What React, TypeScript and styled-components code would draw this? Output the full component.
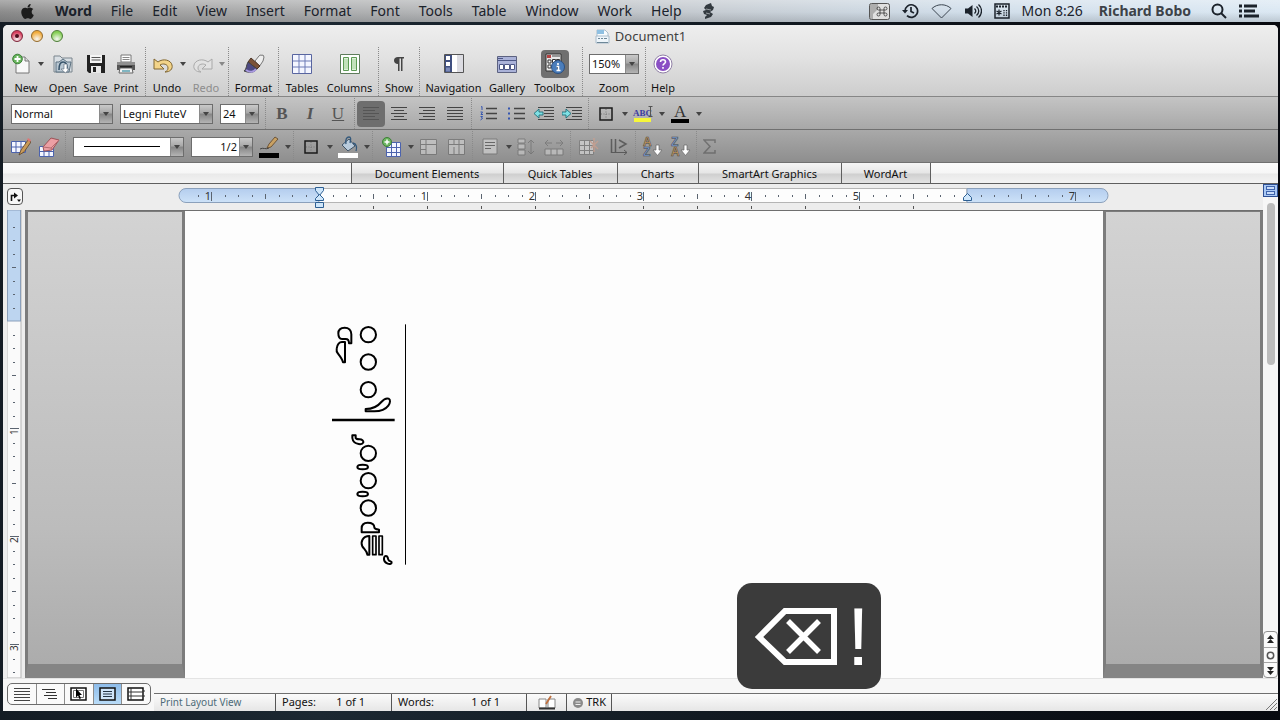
import React from "react";
import styled, { createGlobalStyle, css } from "styled-components";
import { FaApple } from "react-icons/fa";

const Global = createGlobalStyle`
  * { box-sizing: border-box; }
  body {
    margin: 0;
    background: #10171f;
    font-family: "Noto Sans", "Open Sans", "Liberation Sans", sans-serif;
    color: #111;
  }
  button, select, input { font: inherit; color: inherit; }
  svg { display: block; flex: none; }
`;

const INK = "#1b222b";

const Desktop = styled.div`
  min-height: 100vh;
  display: flex;
  flex-direction: column;
  position: relative;
  background: linear-gradient(90deg, #141c24 0%, #1c2832 25%, #121a22 55%, #07090f 100%);
`;

/* ---------- system menu bar ---------- */

const MenuBar = styled.header`
  display: flex;
  align-items: center;
  height: 22px;
  padding: 0 21px 0 19px;
  background:
    linear-gradient(180deg, rgba(255, 255, 255, 0.3) 0%, rgba(255, 255, 255, 0) 55%, rgba(30, 35, 40, 0.16) 100%),
    linear-gradient(90deg, #8b8b8b 0%, #a2a2a2 12%, #b4b6b8 35%, #c5cbd1 55%, #d0dde9 75%, #dbe8f3 100%);
`;

const Menus = styled.nav`
  display: flex;
  flex: 1;
  align-items: center;
  gap: 1px;
  margin-left: 10px;
`;

const MenuItem = styled.button<{ $strong?: boolean }>`
  border: 0;
  padding: 0 9px;
  background: none;
  font-size: 14px;
  line-height: 20px;
  font-weight: ${(p) => (p.$strong ? 700 : 400)};
  color: ${INK};
`;

const MenuExtras = styled.div`
  display: flex;
  align-items: center;
  gap: 12px;
  font-size: 14px;
  line-height: 20px;
  color: ${INK};
`;

const UserName = styled.span`
  margin: 0 8px 0 4px;
  font-weight: 700;
  color: #3d4248;
`;

/* ---------- window frame ---------- */

const Window = styled.main`
  flex: 1;
  display: flex;
  flex-direction: column;
  margin: 3px 2px 9px 3px;
  border-radius: 5px 5px 0 0;
  overflow: hidden;
  background: #ededed;
`;

const WindowHead = styled.div`
  background: linear-gradient(180deg, #eeeeee 0%, #e2e2e2 45%, #cdcdcd 100%);
  border-bottom: 1px solid #868686;
`;

const TitleBar = styled.div`
  display: grid;
  grid-template-columns: 1fr auto 1fr;
  align-items: center;
  height: 22px;
  padding: 0 8px;
`;

const Lights = styled.div`
  display: flex;
  gap: 8px;
`;

const Light = styled.button<{ $fill: string; $edge: string; $edited?: boolean }>`
  display: flex;
  align-items: center;
  justify-content: center;
  width: 12px;
  height: 12px;
  padding: 0;
  border: 1px solid ${(p) => p.$edge};
  border-radius: 50%;
  background: radial-gradient(circle at 50% 80%, #ffffff99 0%, ${(p) => p.$fill} 70%);
  ${(p) => p.$edited && css`
    &::after {
      content: "";
      width: 4px;
      height: 4px;
      border-radius: 50%;
      background: #4d0d1c;
    }
  `}
`;

const Title = styled.h1`
  display: flex;
  align-items: center;
  gap: 5px;
  margin: 0;
  font-size: 13px;
  line-height: 20px;
  font-weight: 400;
  color: #404040;
`;

const Toolbar = styled.div`
  display: flex;
  height: 49px;
  padding-left: 5px;
`;

const Tool = styled.button<{ $w: number; $faded?: boolean }>`
  display: flex;
  flex-direction: column;
  align-items: center;
  width: ${(p) => p.$w}px;
  padding: 0;
  border: 0;
  background: none;
  font-size: 11px;
  line-height: 14px;
  white-space: nowrap;
  color: ${(p) => (p.$faded ? "#8d8d8d" : "#111")};
`;

const ToolGlyph = styled.span<{ $caret?: boolean }>`
  display: flex;
  align-items: center;
  justify-content: center;
  gap: 6px;
  height: 34px;
  padding-left: ${(p) => (p.$caret ? 4 : 0)}px;
`;

const Pressed = styled.span`
  display: flex;
  align-items: center;
  justify-content: center;
  width: 28px;
  height: 28px;
  border-radius: 4px;
  background: #6f6f6f;
`;

const ZoomField = styled.label`
  display: flex;
  flex-direction: column;
  align-items: center;
  width: 58px;
  font-size: 11px;
  line-height: 14px;
`;

const Divider = styled.span`
  width: 5px;
  display: flex;
  justify-content: center;
  align-self: stretch;
  &::before {
    content: "";
    border-left: 1px dotted #8a8a8a;
  }
`;

/* ---------- formatting bars ---------- */

const FormatBar = styled.div<{ $deep?: boolean }>`
  display: flex;
  align-items: center;
  height: 33px;
  padding: 1px 0 0 ${(p) => (p.$deep ? 4 : 8)}px;
  border-bottom: 1px solid #707070;
  background: ${(p) =>
    p.$deep ? "linear-gradient(180deg, #a9a9a9, #8e8e8e)" : "linear-gradient(180deg, #c4c4c4, #a8a8a8)"};
`;

const Combos = styled.div<{ $end: number; $start?: number }>`
  display: flex;
  gap: 7px;
  margin: 0 ${(p) => p.$end}px 0 ${(p) => p.$start || 0}px;
`;

const Combo = styled.span<{ $w: number }>`
  display: flex;
  width: ${(p) => p.$w}px;
  height: 20px;
  border: 1px solid #6d6d6d;
  background: #fff;
  select {
    flex: 1;
    min-width: 0;
    appearance: none;
    border: 0;
    padding: 0 2px;
    background: #fff;
    color: #111;
    font-size: 11px;
    line-height: 18px;
  }
`;

const ComboArrow = styled.span`
  display: flex;
  align-items: center;
  justify-content: center;
  width: 13px;
  border-left: 1px solid #8a8a8a;
  background: linear-gradient(180deg, #c9c9c9 0%, #a8a8a8 45%, #858585 50%, #b4b4b4 100%);
`;

const BarButton = styled.button<{ $w?: number; $on?: boolean; $faded?: boolean }>`
  display: flex;
  align-items: center;
  justify-content: center;
  width: ${(p) => p.$w || 28}px;
  height: 26px;
  padding: 0;
  border: 0;
  border-radius: 4px;
  background: ${(p) => (p.$on ? "#6e6e6e" : "none")};
  opacity: ${(p) => (p.$faded ? 0.6 : 1)};
`;

const Letter = styled.span<{ $kind: "b" | "i" | "u" }>`
  font-family: "Liberation Serif", serif;
  font-size: 17px;
  line-height: 18px;
  font-weight: 700;
  color: #555;
  ${(p) => p.$kind === "i" && css`font-style: italic;`}
  ${(p) => p.$kind === "u" && css`font-weight: 400; text-decoration: underline;`}
`;

const CaretSlot = styled.span`
  display: flex;
  justify-content: center;
  width: 7px;
`;

/* ---------- elements gallery tabs ---------- */

const TabRow = styled.div`
  display: flex;
  justify-content: center;
  height: 21px;
  border-bottom: 1px solid #5f5f5f;
  background: linear-gradient(180deg, #fbfbfb 0%, #f6f6f6 50%, #e9e9e9 55%, #f3f3f3 100%);
`;

const Tab = styled.button<{ $w: number }>`
  width: ${(p) => p.$w}px;
  padding: 1px 0 0;
  border: 0;
  border-left: 1px solid #5f5f5f;
  background: linear-gradient(180deg, #f5f5f5 0%, #e6e6e6 50%, #cfcfcf 55%, #e3e3e3 100%);
  font-size: 11px;
  line-height: 18px;
  white-space: nowrap;
  color: #111;
  &:last-child { border-right: 1px solid #5f5f5f; }
`;

/* ---------- document area ---------- */

const Body = styled.div`
  flex: 1;
  display: grid;
  grid-template-columns: 22px minmax(0, 1fr) 15px;
  grid-template-rows: 26px minmax(0, 1fr);
`;

const Corner = styled.div`
  display: flex;
  padding: 4px 0 0 4px;
`;

const TabStop = styled.button`
  display: flex;
  width: 16px;
  height: 17px;
  padding: 1px;
  border: 1px solid #555;
  border-radius: 4px;
  background: #f7f7f7;
`;

const RulerRow = styled.div`
  display: flex;
  justify-content: center;
  overflow: hidden;
`;

const ScrollColumn = styled.div`
  grid-column: 3;
  grid-row: 1 / 3;
  display: flex;
  flex-direction: column;
  align-items: center;
  background: #f6f6f6;
`;

const SplitHandle = styled.button`
  display: flex;
  flex-direction: column;
  justify-content: space-evenly;
  width: 15px;
  height: 13px;
  padding: 0 2px;
  border: 1px solid #2d4f94;
  background: #a9c8f4;
  i { height: 4px; border: 1px solid #3f64ad; background: #c9dcf9; }
`;

const Track = styled.div`
  flex: 1;
  padding-top: 6px;
`;

const Thumb = styled.div`
  width: 8px;
  height: 162px;
  border-radius: 4px;
  background: #bcbcbc;
`;

const Browse = styled.div`
  display: flex;
  flex-direction: column;
  width: 15px;
  border: 1px solid #8f8f8f;
  border-radius: 4px;
  background: #fafafa;
`;

const BrowseButton = styled.button`
  display: flex;
  align-items: center;
  justify-content: center;
  height: 15px;
  padding: 0;
  border: 0;
  background: none;
  & + & { border-top: 1px solid #a5a5a5; }
`;

const SideRuler = styled.div`
  display: flex;
  flex-direction: column;
  padding-left: 4px;
  svg { flex: 1; height: 0; min-height: 0; }
`;

const Sheets = styled.div`
  display: flex;
  border-top: 1px solid #6f6f6f;
  background: #fdfdfd;
`;

const Pasteboard = styled.div`
  flex: 1;
  border: solid #7c7c7c;
  border-width: 1px 3px 0 3px;
  background: linear-gradient(180deg, #d3d3d3 0%, #c9c9c9 30%, #bcbcbc 70%, #acacac 100%);
  border-bottom: 14px solid #858585;
`;

const Page = styled.article`
  width: 918px;
  padding: 99px 125px 0;
  background: #fdfdfd;
`;

/* ---------- status area ---------- */

const Footer = styled.footer`
  display: flex;
  height: 33px;
  border-top: 1px solid #e4e4e4;
  background: #f7f7f7;
`;

const Views = styled.div`
  display: flex;
  width: 144px;
  height: 22px;
  margin: 4px 3px 0 4px;
  border: 1px solid #6c6c6c;
  border-radius: 5px;
  overflow: hidden;
  background: #fafafa;
`;

const ViewButton = styled.button<{ $on?: boolean }>`
  flex: 1;
  display: flex;
  align-items: center;
  justify-content: center;
  padding: 0;
  border: 0;
  background: ${(p) => (p.$on ? "linear-gradient(180deg, #8dbcea, #b9dcf8)" : "none")};
  & + & { border-left: 1px solid #8c8c8c; }
`;

const Status = styled.div`
  flex: 1;
  display: flex;
  height: 18px;
  align-self: flex-end;
  border-top: 1px solid #6f6f6f;
  background: linear-gradient(180deg, #fbfbfb, #e6e6e6);
  font-size: 11px;
  line-height: 16px;
  white-space: nowrap;
`;

const Cell = styled.div<{ $w: number; $muted?: boolean }>`
  display: flex;
  justify-content: space-between;
  width: ${(p) => p.$w}px;
  padding: 0 5px 0 6px;
  border-right: 1px solid #555;
  ${(p) => p.$muted && css`font-size: 10px; color: #4d6b78;`}
  > svg { align-self: center; }
`;

const Count = styled.span`
  padding-right: 21px;
`;

const Grip = styled.div`
  display: flex;
  flex: 1;
  align-items: flex-end;
  justify-content: flex-end;
`;

/* ---------- keystroke bezel ---------- */

const Bezel = styled.div`
  position: absolute;
  left: calc(50% + 97px);
  bottom: 31px;
  display: flex;
  align-items: center;
  width: 144px;
  height: 106px;
  padding: 2px 0 0 18px;
  border-radius: 15px;
  background: #3b3b3b;
  color: #fff;
`;

const Bang = styled.span`
  margin-left: 8px;
  font-family: "Liberation Sans", sans-serif;
  font-size: 81px;
  line-height: 104px;
`;

/* ---------- drawings ---------- */

const Caret = ({ c = "#444" }: { c?: string }) => (
  <svg width="6" height="4" viewBox="0 0 6 4"><path d="M0 0h6L3 4z" fill={c} /></svg>
);

const NewIcon = () => (
  <svg width="20" height="22" viewBox="0 0 20 22">
    <path d="M4 4h9l4 4v12H4z" fill="#f8f8f8" stroke="#777" />
    <path d="M13 4v4h4" fill="#ddd" stroke="#777" />
    <circle cx="5.500" cy="6" r="4.800" fill="#67b35c" stroke="#3d7f38" />
    <path d="M5.500 3v6M2.500 6h6" stroke="#fff" strokeWidth="1.800" />
  </svg>
);
const OpenIcon = () => (
  <svg width="20" height="22" viewBox="0 0 20 22">
    <path d="M1 3h6l2 2h10v14H1z" fill="#d9dfe4" stroke="#7b858d" />
    <path d="M3 19V9h3l4-3 4 3h4l-2 10z" fill="#b9c7d2" stroke="#5d7180" />
    <path d="M6 17c0-5 1-8 4-8s4 3 4 6" fill="none" stroke="#37536a" strokeWidth="1.600" />
    <path d="M11 11v5h-3l4.500 4 3.500-4h-2v-5z" fill="#fff" stroke="#567" strokeWidth=".6" />
  </svg>
);
const SaveIcon = () => (
  <svg width="20" height="20" viewBox="0 0 20 20">
    <path d="M1 1h18v18H3l-2-2z" fill="#222" />
    <rect x="4" y="1" width="12" height="8" fill="#f4f4f4" />
    <path d="M5.500 3.500h9M5.500 6h9" stroke="#555" />
    <rect x="5" y="12" width="10" height="7" fill="#e8e8e8" />
    <rect x="7" y="13" width="3" height="5" fill="#222" />
  </svg>
);
const PrintIcon = () => (
  <svg width="20" height="20" viewBox="0 0 20 20">
    <path d="M5 1h10v7H5z" fill="#fff" stroke="#777" />
    <path d="M6.500 3.500h7M6.500 5.500h7" stroke="#888" />
    <path d="M1 8h18v8H1z" fill="#555" />
    <path d="M1 8h18v3H1z" fill="#909090" />
    <path d="M4 12h12v2H4z" fill="#222" />
    <path d="M4 14h12l1 5H3z" fill="#f3f3f3" stroke="#666" />
    <path d="M6 17h8" stroke="#5aa0b0" strokeWidth="1.500" />
  </svg>
);
const UndoIcon = ({ redo }: { redo?: boolean }) => (
  <svg width="21" height="18" viewBox="0 0 21 18">
    <path
      d={redo ? "M20 4v10H10l4-4c-3-2-8-1-8 3 0 2 1 3 3 4-5 0-8-3-7-7 1-5 9-7 14-3z" : "M1 4v10h10l-4-4c3-2 8-1 8 3 0 2-1 3-3 4 5 0 8-3 7-7-1-5-9-7-14-3z"}
      fill={redo ? "#e2e2e2" : "#f3d489"}
      stroke={redo ? "#a9a9a9" : "#806733"}
    />
  </svg>
);
const BrushIcon = () => (
  <svg width="22" height="22" viewBox="0 0 22 22">
    <path d="M12 8l4-5c1-2 3 0 4-1l1 2-1 4-4 6z" fill="#eee" stroke="#777" />
    <path d="M8 5l9 8-3 3-9-7z" fill="#7b5238" stroke="#4b3324" />
    <path d="M5 9l9 7c-3 4-8 4-13 2 3-2 2-6 4-9z" fill="#4d4a82" stroke="#444" />
    <path d="M3 17c4 3 8 2 10-1" stroke="#a99ae0" strokeWidth="2" fill="none" />
  </svg>
);
const TablesIcon = () => (
  <svg width="20" height="20" viewBox="0 0 20 20">
    <path d="M.5.5h19v19H.5z" fill="#f4f6ff" stroke="#5865a0" />
    <path d="M7 1v18M13 1v18M1 7h18M1 13h18" stroke="#6d7bb5" />
  </svg>
);
const ColumnsIcon = () => (
  <svg width="20" height="20" viewBox="0 0 20 20">
    <path d="M.5.5h19v19H.5z" fill="#fdfffd" stroke="#5e7d5b" />
    <path d="M3.500 3.500h5v13h-5zM11.500 3.500h5v13h-5z" fill="#dff2da" stroke="#5d9a54" />
    <path d="M4 6h4M4 8h4M4 10h4M4 12h4M4 14h4M12 6h4M12 8h4M12 10h4M12 12h4M12 14h4" stroke="#a7d19d" />
  </svg>
);
const PilcrowIcon = () => (
  <svg width="12" height="16" viewBox="0 0 12 16">
    <path d="M11 1H5C2.500 1 1 2.500 1 4.500S2.500 8 5 8v7h1.500V2.500h1.500V15h1.500V2.500H11z" fill="#454545" />
  </svg>
);
const NavigationIcon = () => (
  <svg width="20" height="20" viewBox="0 0 20 20">
    <path d="M.5.500h19v18H.5z" fill="#dcdce2" stroke="#555" />
    <path d="M1 1h7v17H1z" fill="#3f4f80" />
    <path d="M2 2h4v4H2zM2 8h4v4H2z" fill="#fff" />
    <path d="M2 13.500h4v4H2z" fill="#7c8ab8" />
    <path d="M8 1h5v17H8z" fill="#fff" />
  </svg>
);
const GalleryIcon = () => (
  <svg width="20" height="17" viewBox="0 0 20 17">
    <path d="M.5.500h19v16H.5z" fill="#aab2d8" stroke="#5c6280" />
    <path d="M1 4.500h18M1 2.500h5" stroke="#4d5786" />
    <path d="M2.500 8.500h4v5h-4zM7.500 8.500h5v5h-5zM13.500 8.500h4v5h-4z" fill="#fff" stroke="#4d5786" />
  </svg>
);
const ToolboxIcon = () => (
  <svg width="20" height="22" viewBox="0 0 20 22">
    <path d="M1 1h15v17H1z" fill="#e8e8e8" stroke="#333" />
    <path d="M2 2h4v3H2z" fill="#b34343" /><path d="M7 3h8" stroke="#444" />
    <path d="M3 7h3v3H3zM7.500 6.500h3v3h-3zM11.500 6.500h3v3h-3zM3 12h3v3H3z" fill="#fff" stroke="#333" />
    <circle cx="13" cy="14" r="6.500" fill="#4a7dbb" stroke="#2b4f80" />
    <path d="M13 10v2M11.500 13.500H13.500V17.500M11.500 17.500h4" stroke="#fff" strokeWidth="1.600" />
  </svg>
);
const HelpIcon = () => (
  <svg width="20" height="20" viewBox="0 0 20 20">
    <circle cx="10" cy="10" r="9" fill="#fff" stroke="#8f7fa5" />
    <circle cx="10" cy="10" r="7" fill="#8a4fc4" />
    <path d="M7.500 8c0-3 5-3 5 0 0 1.500-2.500 1.700-2.500 3.500M10 13v1.700" stroke="#fff" strokeWidth="1.600" fill="none" />
  </svg>
);

const LINES: Record<string, [number, number][]> = {
  left: [[0, 16], [0, 12], [0, 16], [0, 12], [0, 16]],
  center: [[0, 16], [3, 13], [0, 16], [3, 13], [0, 16]],
  right: [[0, 16], [4, 16], [0, 16], [4, 16], [0, 16]],
  full: [[0, 16], [0, 16], [0, 16], [0, 16], [0, 16]],
};
const AlignIcon = ({ kind, c = "#444" }: { kind: string; c?: string }) => (
  <svg width="16" height="15" viewBox="0 0 16 15">
    {LINES[kind].map(([a, b], i) => <path key={i} d={`M${a} ${1.5 + i * 3}H${b}`} stroke={c} />)}
  </svg>
);
const ListIcon = ({ numbered }: { numbered?: boolean }) => (
  <svg width="17" height="15" viewBox="0 0 17 15">
    <path d="M6 2.500h11M6 7.500h11M6 12.500h11" stroke="#444" strokeWidth="1.300" />
    {numbered ? (
      <path d="M1 1l1-.5V4M.5 6h2L1 8.500h2M.5 10.500h2l-1 1.500 1 .5-2 1.500" fill="none" stroke="#3455b0" />
    ) : (
      <path d="M0 1.500h2v2H0zM0 6.500h2v2H0zM0 11.500h2v2H0z" fill="#3455b0" />
    )}
  </svg>
);
const IndentIcon = ({ out }: { out?: boolean }) => (
  <svg width="20" height="15" viewBox="0 0 20 15">
    <path d="M4 1.500h16M10 4.500h10M10 7.500h10M10 10.500h10M4 13.500h16" stroke="#444" />
    <path
      d={out ? "M0 7.500L5 3v3h4v3H5v3z" : "M9 7.500L4 3v3H0v3h4v3z"}
      fill="#7fe0e4" stroke="#1f6f7a" strokeWidth=".9"
    />
  </svg>
);
const BorderIcon = () => (
  <svg width="14" height="14" viewBox="0 0 14 14">
    <path d="M1 1h12v12H1z" fill="none" stroke="#1a1a1a" strokeWidth="1.500" />
    <path d="M7 2v10M2 7h10" stroke="#777" strokeDasharray="1 1.500" />
  </svg>
);
const HighlightIcon = () => (
  <svg width="20" height="18" viewBox="0 0 20 18">
    <text x="0" y="11" fontSize="9" fontWeight="700" fontFamily="Liberation Serif, serif" fill="#3d3da0">ABC</text>
    <path d="M15.500 1.500h4M17.500 1.500v10M15.500 11.500h4" stroke="#555" />
    <path d="M1 13h17v4H1z" fill="#f7f73a" />
  </svg>
);
const FontColorIcon = () => (
  <svg width="18" height="22" viewBox="0 0 18 22">
    <text x="3" y="14" fontSize="17" fontFamily="Liberation Serif, serif" fill="#333">A</text>
    <path d="M0 16h18v4H0z" fill="#000" />
  </svg>
);
const Grid = ({ x = 0, y = 0, blue }: { x?: number; y?: number; blue?: boolean }) => (
  <g transform={`translate(${x} ${y})`} stroke={blue ? "#4c63ad" : "#6f6f6f"}>
    <path d="M.5.500h14v14H.5z" fill={blue ? "#f2f5ff" : "#e0e0e0"} />
    <path d="M5.500 1v13M10.500 1v13M1 5.500h13M1 10.500h13" />
  </g>
);
const DrawTableIcon = () => (
  <svg width="20" height="20" viewBox="0 0 20 20">
    <path d="M.5 4.500h14v11H.5zM5 5v10M10 5v10M1 10h13" fill="#f4f6ff" stroke="#4c63ad" />
    <path d="M8 18l2-5 7-10 3 2-7 10z" fill="#c99a58" stroke="#5b4328" strokeWidth=".8" />
    <path d="M16 3l1-2 3 2-1 2z" fill="#d77" />
  </svg>
);
const EraserIcon = () => (
  <svg width="21" height="20" viewBox="0 0 21 20">
    <path d="M.5 9.500h14v10H.5zM5 10v9M10 10v9M1 14.500h13" fill="#f4f6ff" stroke="#4c63ad" />
    <path d="M4 10L12 1l8 2-7 10-8 1z" fill="#ec9fa4" stroke="#9c5358" />
    <path d="M4 10l8 1 8-8M12 11l1 2" fill="none" stroke="#b56c70" />
  </svg>
);
const PenColorIcon = () => (
  <svg width="20" height="22" viewBox="0 0 20 22">
    <path d="M1 13c3-2 6 1 9-1" stroke="#444" fill="none" />
    <path d="M8 12l2-4 6-7 3 2-7 8z" fill="#c9a163" stroke="#5b4328" strokeWidth=".8" />
    <path d="M0 17h20v5H0z" fill="#000" />
  </svg>
);
const BucketIcon = () => (
  <svg width="20" height="22" viewBox="0 0 20 22">
    <path d="M4 9l7-6 6 7-7 5z" fill="#b9cbdc" stroke="#3f5366" />
    <path d="M8 8c-1-5 1-7 3-7s2 2 1 6M15 7c4 1 4 5 3 8" fill="none" stroke="#33587b" strokeWidth="1.300" />
    <path d="M0 17h20v5H0z" fill="#fff" />
  </svg>
);
const InsertTableIcon = () => (
  <svg width="19" height="20" viewBox="0 0 19 20">
    <Grid x={4} y={5} blue />
    <circle cx="5" cy="5" r="4.500" fill="#6cb45f" stroke="#3d7f38" />
    <path d="M5 2.500v5M2.500 5h5" stroke="#fff" strokeWidth="1.500" />
  </svg>
);
const CellsIcon = ({ split }: { split?: boolean }) => (
  <svg width="17" height="16" viewBox="0 0 17 16" stroke="#666" fill="#d4d4d4">
    <path d="M.5.500h16v15H.5z" />
    <path d={split ? "M1 5.500h15M6 1v4M11 1v4M6 8v7M11 5v10" : "M1 5.500h15M6 1v14M1 10.500h5"} />
  </svg>
);
const AlignCellIcon = () => (
  <svg width="17" height="17" viewBox="0 0 17 17">
    <path d="M1 1h14v15H1z" fill="#dcdcdc" stroke="#666" />
    <path d="M3 4.500h10M3 7.500h10M3 10.500h6" stroke="#444" />
  </svg>
);
const RowsIcon = () => (
  <svg width="18" height="18" viewBox="0 0 18 18" fill="#d0d0d0" stroke="#666">
    <path d="M1 1h7v4H1zM1 6h7v5H1zM1 12h7v5H1z" />
    <path d="M14 2v14M11 5l3-3 3 3M11 13l3 3 3-3" fill="none" />
  </svg>
);
const ColsIcon = () => (
  <svg width="20" height="18" viewBox="0 0 20 18" fill="#d0d0d0" stroke="#666">
    <path d="M1 11h18v6H1zM7 11v6M13 11v6" />
    <path d="M2 5h6M4 2L1 5l3 3M12 5h6M16 2l3 3-3 3" fill="none" />
  </svg>
);
const AutoFormatIcon = () => (
  <svg width="20" height="19" viewBox="0 0 20 19">
    <Grid x={0} y={3} />
    <path d="M15 1v14M11 4l8 8M19 4l-7 7" stroke="#d9a08a" strokeWidth="1.400" />
  </svg>
);
const TextDirIcon = () => (
  <svg width="18" height="17" viewBox="0 0 18 17" fill="none" stroke="#333">
    <path d="M1.500 1v14M5.500 1v14M9 2l7 4-7 4" strokeWidth="1.500" />
    <path d="M1 14.500h16M14 12l3 2.500L14 17" />
  </svg>
);
const SortIcon = ({ desc }: { desc?: boolean }) => (
  <svg width="21" height="22" viewBox="0 0 21 22" fontFamily="Liberation Sans, sans-serif" fontSize="12" fontWeight="700" stroke="#444" strokeWidth=".5">
    <text x="1" y="10" fill={desc ? "#7a9fd8" : "#c99a5c"}>{desc ? "Z" : "A"}</text>
    <text x="1" y="20" fill={desc ? "#c99a5c" : "#7a9fd8"}>{desc ? "A" : "Z"}</text>
    <path d="M14 9h3v5h3l-4.500 5.500L11 14h3z" fill="#fff" stroke="#666" strokeWidth=".7" />
  </svg>
);
const SumIcon = () => (
  <svg width="13" height="15" viewBox="0 0 13 15">
    <path d="M12 4V1H1l6 6.500L1 14h11v-3" fill="none" stroke="#555" strokeWidth="1.500" />
  </svg>
);

/* Musical figures written with the flute fingering font, plus the caret at their right. */
const FluteChart = () => (
  <svg width="120" height="270" viewBox="0 0 360 810" fill="none" stroke="#000" strokeWidth="6" strokeLinejoin="round">
    {[74, 156, 239, 430, 512, 594].map((y) => <circle key={y} cx="175" cy={y} r="23" />)}
    <path d="M66 330h188" strokeWidth="8" />
    <path d="M286.500 43v721" strokeWidth="3" />
    <path d="M85 70c0-11 8-17 19-17 12 0 20 8 20 20v27h-7c0-9-3-13-10-13h-11c-8 0-11-8-11-17z" />
    <path d="M80 116c2-13 7-20 16-20h9v61h-6c-2-10-8-17-15-26-4-5-5-10-4-15z" />
    <path d="M167 304v-7c26 0 38-10 47-21 7-8 16-12 22-10 6 3 5 13-1 21-8 11-25 17-42 17z" />
    <path d="M127 376h10v8c2 4 6 4 12 4 7 0 12 4 11 9-2 5-8 6-14 5-12-2-18-10-19-18z" />
    <ellipse cx="158" cy="471" rx="16" ry="7" />
    <ellipse cx="158" cy="552" rx="16" ry="7" />
    <path d="M155 667v-12c0-11 7-17 18-17 14 0 20 5 20 14 1 6 7 6 14 7v8z" />
    <path d="M178 678v56h-6c-1-12-9-16-15-25-6-13 1-31 21-31z" />
    <path d="M188 678h10v56h-10zM207 678h10v56h-10z" strokeWidth="5" />
    <path d="M222 744c1-8 9-8 11-2 1 4 1 7 4 10 3 2 9 2 8 6-1 4-7 5-12 3-8-3-12-9-11-17z" />
  </svg>
);

const Scale = () => {
  const ticks: React.ReactNode[] = [];
  for (let i = -9; i <= 57; i++) {
    const x = Math.round(141 + i * 13.5);
    if (i === 0 || i === 48) continue;
    const inch = i % 8 === 0;
    const half = i % 4 === 0;
    ticks.push(<path key={i} d={inch ? `M${x}.5 8v9` : half ? `M${x}.5 10v5` : `M${x}.5 11v2`} stroke="#5b6470" />);
    if (inch) ticks.push(<text key={`n${i}`} x={x} y="16" textAnchor="end">{Math.abs(i / 8)}</text>);
    if (half && i > 0 && i < 48) ticks.push(<path key={`t${i}`} d={`M${x}.5 22v3`} stroke="#555" />);
  }
  return (
    <svg width="932" height="26" viewBox="0 0 932 26" fontSize="11" fill="#333">
      <defs>
        <linearGradient id="scaleBlue" x1="0" y1="0" x2="0" y2="1">
          <stop offset="0" stopColor="#b4cdee" /><stop offset="1" stopColor="#cde2f8" />
        </linearGradient>
      </defs>
      <path d="M141 4.500H8a7 7 0 0 0 0 14h133z" fill="url(#scaleBlue)" stroke="#8ba0bb" />
      <path d="M141 4.500h648v14H141z" fill="#fdfdfd" stroke="#b5b5b5" />
      <path d="M789 4.500h134a7 7 0 0 1 0 14H789z" fill="url(#scaleBlue)" stroke="#8ba0bb" />
      {ticks}
      <g fill="#cfe6fa" stroke="#2d5f93">
        <path d="M137.500 3.500h8v3l-4 5-4-5z" /><path d="M137.500 16.500v-2l4-4 4 4v2z" />
        <path d="M137.500 18.500h8v5h-8z" /><path d="M785.500 16.500v-3l4-4 4 4v3z" />
      </g>
    </svg>
  );
};

/* Height taken by everything above the side ruler's zero mark and below its end. */
const RULER_CHROME = 363;

const VerticalScale = () => {
  const last = Math.floor((window.innerHeight - RULER_CHROME) / 13.5);
  const ticks: React.ReactNode[] = [];
  for (let i = -7; i <= last; i++) {
    const y = Math.round(111 + i * 13.5);
    if (i === 0) continue;
    const inch = i % 8 === 0;
    ticks.push(<path key={i} d={inch ? `M3 ${y - 1}.5h9` : i % 4 === 0 ? `M5 ${y}.5h4` : `M6 ${y}.5h2`} stroke="#5b6470" />);
    if (inch) ticks.push(<text key={`n${i}`} transform={`translate(11 ${y + 6}) rotate(-90)`}>{i / 8}</text>);
  }
  return (
    <svg width="15" fontSize="10" fill="#333">
      <rect x="0" y="0" width="14" height="100%" fill="#fafafa" stroke="#b5b5b5" />
      <rect x="0.500" y="0" width="13" height="111" fill="#bdd5f0" stroke="#8ba0bb" />
      {ticks}
    </svg>
  );
};

const MENUS = ["File", "Edit", "View", "Insert", "Format", "Font", "Tools", "Table", "Window", "Work", "Help"];
const TABS: [string, number][] = [
  ["Document Elements", 152], ["Quick Tables", 114], ["Charts", 81], ["SmartArt Graphics", 143], ["WordArt", 90],
];

function Select({ label, value, w, right }: { label: string; value: string; w: number; right?: boolean }) {
  return (
    <Combo $w={w}>
      <select aria-label={label} defaultValue={value} dir={right ? "rtl" : "ltr"}>
        <option value={value}>{value}</option>
      </select>
      <ComboArrow><Caret /></ComboArrow>
    </Combo>
  );
}

function LineSelect() {
  return (
    <Combo $w={111}>
      <select aria-label="Line style" defaultValue="solid">
        <option value="solid" label=" " />
      </select>
      <ComboArrow><Caret /></ComboArrow>
    </Combo>
  );
}

const LineCombo = styled.span`
  display: grid;
  > * { grid-area: 1 / 1; }
  > i {
    z-index: 1;
    align-self: center;
    margin: 0 24px 0 11px;
    border-top: 1px solid #000;
    pointer-events: none;
  }
`;

const DropDown = () => <CaretSlot><Caret /></CaretSlot>;

export default function App() {
  return (
    <Desktop>
      <Global />
      <MenuBar>
        <FaApple size={17} color="#1c1c1c" />
        <Menus>
          <MenuItem $strong>Word</MenuItem>
          {MENUS.map((m) => <MenuItem key={m}>{m}</MenuItem>)}
          <MenuItem aria-label="Scripts">
            <svg width="14" height="16" viewBox="0 0 14 16">
              <path d="M10 0l1 3 2 1-1 3-3 2 3 2-2 3-6 2v-2l2-2-3-1-1-3 3-1-2-2 2-3z" fill="#333a40" />
              <path d="M5 6l5 1M5 10l4 1" stroke="#aeb4b8" strokeWidth=".8" />
            </svg>
          </MenuItem>
        </Menus>
        <MenuExtras>
          <svg width="21" height="17" viewBox="0 0 21 17">
            <rect x=".5" y=".5" width="20" height="16" rx="2" fill="#e0e0e0" stroke="#555" />
            <path d="M1 1h8v5l-5 5v5H1z" fill="#8b8b8b" opacity=".6" />
            <path d="M11 7h4v3h-4zM11 7H9.500A1.500 1.500 0 1 1 11 5.500zM15 7V5.500A1.500 1.500 0 1 1 16.500 7zM11 10v1.500A1.500 1.500 0 1 1 9.500 10zM15 10h1.500A1.500 1.500 0 1 1 15 11.500z" fill="none" stroke="#333" strokeWidth=".8" />
          </svg>
          <svg width="17" height="16" viewBox="0 0 17 16" fill="none" stroke={INK} strokeWidth="1.700">
            <path d="M3 8a6.300 6.300 0 1 1 2 4.700" /><path d="M0 7h6L3 10.500z" fill={INK} stroke="none" /><path d="M9 4v4.500l3 1.500" />
          </svg>
          <svg width="21" height="16" viewBox="0 0 21 16" fill="none" stroke="#3b4550">
            <path d="M1 5.500C6 .5 15 .5 20 5.500L10.500 15z" />
          </svg>
          <svg width="18" height="16" viewBox="0 0 18 16" fill="none" stroke={INK} strokeWidth="1.500">
            <path d="M1 5.500h3L8.500 2v12L4 10.500H1z" fill={INK} stroke="none" />
            <path d="M10.500 5.500c1.500 1.500 1.500 3.500 0 5M12.500 3.500c3 2.500 3 6.500 0 9M14.500 1.500c4 3.500 4 9.500 0 13" strokeWidth="1.300" />
          </svg>
          <svg width="16" height="16" viewBox="0 0 16 16" fill="none" stroke={INK}>
            <rect x="1" y="1" width="14" height="14" strokeWidth="1.500" />
            <path d="M2 3.500h12" strokeWidth="2" strokeDasharray="2 1" />
            <path d="M5 6.500v6M2.500 8l5 3M7.500 8l-5 3" strokeWidth="1.200" />
            <path d="M10 7v6M12.500 7v6" strokeWidth="1.300" strokeDasharray="1.300 1" />
          </svg>
          <span>Mon 8:26</span>
          <UserName>Richard Bobo</UserName>
          <svg width="16" height="16" viewBox="0 0 16 16" fill="none" stroke={INK} strokeWidth="2">
            <circle cx="6.500" cy="6.500" r="5" /><path d="M10 10l5 5" />
          </svg>
          <svg width="20" height="14" viewBox="0 0 20 14" stroke={INK} strokeWidth="3">
            <path d="M0 2h3M5 2h13M0 7h3M5 7h11M0 12h3M5 12h15" />
          </svg>
        </MenuExtras>
      </MenuBar>

      <Window>
        <WindowHead>
          <TitleBar>
            <Lights>
              <Light aria-label="Close" $fill="#d8405f" $edge="#7c2438" $edited />
              <Light aria-label="Minimize" $fill="#f2ad3f" $edge="#93692a" />
              <Light aria-label="Zoom window" $fill="#86cf57" $edge="#4c7c36" />
            </Lights>
            <Title>
              <svg width="15" height="15" viewBox="0 0 15 15">
                <path d="M2 1h8l3 3v5H2z" fill="#f7fbfe" stroke="#a9bccb" />
                <path d="M2 1h7v4H2z" fill="#8fc0e2" />
                <path d="M1 7h13v7H1z" fill="#eef5fa" stroke="#a9bccb" />
                <path d="M3 9.500h2M6 9.500h2M9 9.500h3M2 13.500h11" stroke="#6d8798" />
              </svg>
              Document1
            </Title>
            <span />
          </TitleBar>
          <Toolbar>
            <Tool $w={36}><ToolGlyph $caret><NewIcon /><Caret /></ToolGlyph>New</Tool>
            <Tool $w={38}><ToolGlyph><OpenIcon /></ToolGlyph>Open</Tool>
            <Tool $w={27}><ToolGlyph><SaveIcon /></ToolGlyph>Save</Tool>
            <Tool $w={34}><ToolGlyph><PrintIcon /></ToolGlyph>Print</Tool>
            <Divider />
            <Tool $w={38}><ToolGlyph $caret><UndoIcon /><Caret /></ToolGlyph>Undo</Tool>
            <Tool $w={40} $faded><ToolGlyph $caret><UndoIcon redo /><Caret c="#888" /></ToolGlyph>Redo</Tool>
            <Divider />
            <Tool $w={45}><ToolGlyph><BrushIcon /></ToolGlyph>Format</Tool>
            <Divider />
            <Tool $w={42}><ToolGlyph><TablesIcon /></ToolGlyph>Tables</Tool>
            <Tool $w={53}><ToolGlyph><ColumnsIcon /></ToolGlyph>Columns</Tool>
            <Divider />
            <Tool $w={36}><ToolGlyph><PilcrowIcon /></ToolGlyph>Show</Tool>
            <Divider />
            <Tool $w={63}><ToolGlyph><NavigationIcon /></ToolGlyph>Navigation</Tool>
            <Tool $w={44}><ToolGlyph><GalleryIcon /></ToolGlyph>Gallery</Tool>
            <Tool $w={51}><ToolGlyph><Pressed><ToolboxIcon /></Pressed></ToolGlyph>Toolbox</Tool>
            <Divider />
            <ZoomField>
              <ToolGlyph><Select label="Zoom" value="150%" w={50} /></ToolGlyph>
              Zoom
            </ZoomField>
            <Divider />
            <Tool $w={30}><ToolGlyph><HelpIcon /></ToolGlyph>Help</Tool>
          </Toolbar>
        </WindowHead>

        <FormatBar>
          <Combos $end={4}>
            <Select label="Style" value="Normal" w={102} />
            <Select label="Font" value="Legni FluteV" w={93} />
            <Select label="Font size" value="24" w={39} />
          </Combos>
          <Divider />
          <BarButton aria-label="Bold"><Letter $kind="b">B</Letter></BarButton>
          <BarButton aria-label="Italic"><Letter $kind="i">I</Letter></BarButton>
          <BarButton aria-label="Underline"><Letter $kind="u">U</Letter></BarButton>
          <Divider />
          <BarButton aria-label="Align left" $on><AlignIcon kind="left" c="#555" /></BarButton>
          <BarButton aria-label="Align center"><AlignIcon kind="center" /></BarButton>
          <BarButton aria-label="Align right"><AlignIcon kind="right" /></BarButton>
          <BarButton aria-label="Justify"><AlignIcon kind="full" /></BarButton>
          <Divider />
          <BarButton aria-label="Numbered list"><ListIcon numbered /></BarButton>
          <BarButton aria-label="Bulleted list"><ListIcon /></BarButton>
          <BarButton aria-label="Decrease indent"><IndentIcon out /></BarButton>
          <BarButton aria-label="Increase indent"><IndentIcon /></BarButton>
          <Divider />
          <BarButton aria-label="Border" $w={30}><BorderIcon /></BarButton>
          <DropDown />
          <BarButton aria-label="Highlight" $w={30}><HighlightIcon /></BarButton>
          <DropDown />
          <BarButton aria-label="Font color" $w={30}><FontColorIcon /></BarButton>
          <DropDown />
        </FormatBar>

        <FormatBar $deep>
          <BarButton aria-label="Draw table"><DrawTableIcon /></BarButton>
          <BarButton aria-label="Eraser"><EraserIcon /></BarButton>
          <Divider />
          <Combos $start={5} $end={1}>
            <LineCombo><LineSelect /><i /></LineCombo>
            <Select label="Line weight" value="1/2" w={62} right />
          </Combos>
          <BarButton aria-label="Border color" $w={30}><PenColorIcon /></BarButton>
          <DropDown />
          <Divider />
          <BarButton aria-label="Table border" $w={30}><BorderIcon /></BarButton>
          <DropDown />
          <BarButton aria-label="Shading" $w={30}><BucketIcon /></BarButton>
          <DropDown />
          <Divider />
          <BarButton aria-label="Insert table" $w={32}><InsertTableIcon /></BarButton>
          <DropDown />
          <BarButton aria-label="Merge cells" $faded><CellsIcon /></BarButton>
          <BarButton aria-label="Split cells" $faded><CellsIcon split /></BarButton>
          <Divider />
          <BarButton aria-label="Cell alignment" $w={30} $faded><AlignCellIcon /></BarButton>
          <DropDown />
          <BarButton aria-label="Distribute rows" $faded><RowsIcon /></BarButton>
          <BarButton aria-label="Distribute columns" $faded><ColsIcon /></BarButton>
          <Divider />
          <BarButton aria-label="Table AutoFormat" $w={32} $faded><AutoFormatIcon /></BarButton>
          <BarButton aria-label="Text direction" $faded><TextDirIcon /></BarButton>
          <Divider />
          <BarButton aria-label="Sort ascending"><SortIcon /></BarButton>
          <BarButton aria-label="Sort descending"><SortIcon desc /></BarButton>
          <Divider />
          <BarButton aria-label="AutoSum" $w={20} $faded><SumIcon /></BarButton>
        </FormatBar>

        <TabRow>
          {TABS.map(([name, w]) => <Tab key={name} $w={w}>{name}</Tab>)}
        </TabRow>

        <Body>
          <Corner>
            <TabStop aria-label="Tab stop">
              <svg width="13" height="13" viewBox="0 0 13 13">
                <path d="M2.500 11V5.500H6" fill="none" stroke="#111" strokeWidth="1.600" />
                <path d="M5 2.500l4 3-4 3zM8 9.500h4L10 12z" fill="#111" />
              </svg>
            </TabStop>
          </Corner>
          <RulerRow><Scale /></RulerRow>
          <ScrollColumn>
            <SplitHandle aria-label="Split window"><i /><i /></SplitHandle>
            <Track><Thumb /></Track>
            <Browse>
              <BrowseButton aria-label="Previous page">
                <svg width="9" height="9" viewBox="0 0 9 9"><path d="M4.500 0L8 4H1zM4.500 4L8 8H1z" fill="#222" /></svg>
              </BrowseButton>
              <BrowseButton aria-label="Browse object">
                <svg width="9" height="9" viewBox="0 0 9 9"><circle cx="4.500" cy="4.500" r="3.200" fill="none" stroke="#555" strokeWidth="1.500" /></svg>
              </BrowseButton>
              <BrowseButton aria-label="Next page">
                <svg width="9" height="9" viewBox="0 0 9 9"><path d="M4.500 9L8 5H1zM4.500 5L8 1H1z" fill="#222" /></svg>
              </BrowseButton>
            </Browse>
          </ScrollColumn>
          <SideRuler><VerticalScale /></SideRuler>
          <Sheets>
            <Pasteboard />
            <Page><FluteChart /></Page>
            <Pasteboard />
          </Sheets>
        </Body>

        <Footer>
          <Views>
            <ViewButton aria-label="Draft view"><AlignIcon kind="full" /></ViewButton>
            <ViewButton aria-label="Outline view">
              <svg width="17" height="13" viewBox="0 0 17 13"><path d="M0 1.500h13M4 4.500h10M2 7.500h13M6 10.500h9" stroke="#333" /></svg>
            </ViewButton>
            <ViewButton aria-label="Publishing view">
              <svg width="17" height="14" viewBox="0 0 17 14">
                <path d="M1 1h15v12H1z" fill="#fff" stroke="#111" strokeWidth="1.500" />
                <path d="M3.500 3.500h10v7h-10z" fill="none" stroke="#777" />
                <path d="M6 1.500v9l2-2 1.500 3.500 1.500-.7L9.500 8H12z" fill="#000" />
              </svg>
            </ViewButton>
            <ViewButton aria-label="Print layout view" $on>
              <svg width="17" height="14" viewBox="0 0 17 14">
                <path d="M1 1h15v12H1z" fill="#cfe5fa" stroke="#111" strokeWidth="1.500" />
                <path d="M4 4.500h9M4 7h9M4 9.500h9" stroke="#234" />
              </svg>
            </ViewButton>
            <ViewButton aria-label="Notebook view">
              <svg width="18" height="14" viewBox="0 0 18 14">
                <path d="M1 1h15v12H1z" fill="#fff" stroke="#111" strokeWidth="1.500" />
                <path d="M4 1v12M1 5h15M1 9h15M17 3v2M17 8v2" stroke="#333" />
              </svg>
            </ViewButton>
          </Views>
          <Status>
            <Cell $w={122} $muted>Print Layout View</Cell>
            <Cell $w={116}>Pages:<Count>1 of 1</Count></Cell>
            <Cell $w={135}>Words:<Count>1 of 1</Count></Cell>
            <Cell $w={40}>
              <span />
              <svg width="18" height="15" viewBox="0 0 18 15">
                <path d="M1 4h7v9H1zM10 4h7v9h-7z" fill="#fff" stroke="#888" />
                <path d="M1 13.500h16" stroke="#333" strokeWidth="2" />
                <path d="M8 9l5-8" stroke="#c0703f" strokeWidth="1.800" />
              </svg>
              <span />
            </Cell>
            <Cell $w={45}>
              <svg width="10" height="10" viewBox="0 0 10 10"><circle cx="5" cy="5" r="5" fill="#8a8a8a" /><path d="M2.500 4h5M2.500 6.500h5" stroke="#eee" /></svg>
              TRK
            </Cell>
            <Grip>
              <svg width="13" height="13" viewBox="0 0 13 13"><path d="M1 12L12 1M5 12l7-7M9 12l3-3" stroke="#777" /></svg>
            </Grip>
          </Status>
        </Footer>
      </Window>

      <Bezel role="status">
        <svg width="84" height="60" viewBox="0 0 84 60" fill="none" stroke="#fff">
          <path d="M4 30L30 4h49v51H30z" strokeWidth="6" />
          <path d="M33 14l31 31M64 14L33 45" strokeWidth="5.500" />
        </svg>
        <Bang>!</Bang>
      </Bezel>
    </Desktop>
  );
}
